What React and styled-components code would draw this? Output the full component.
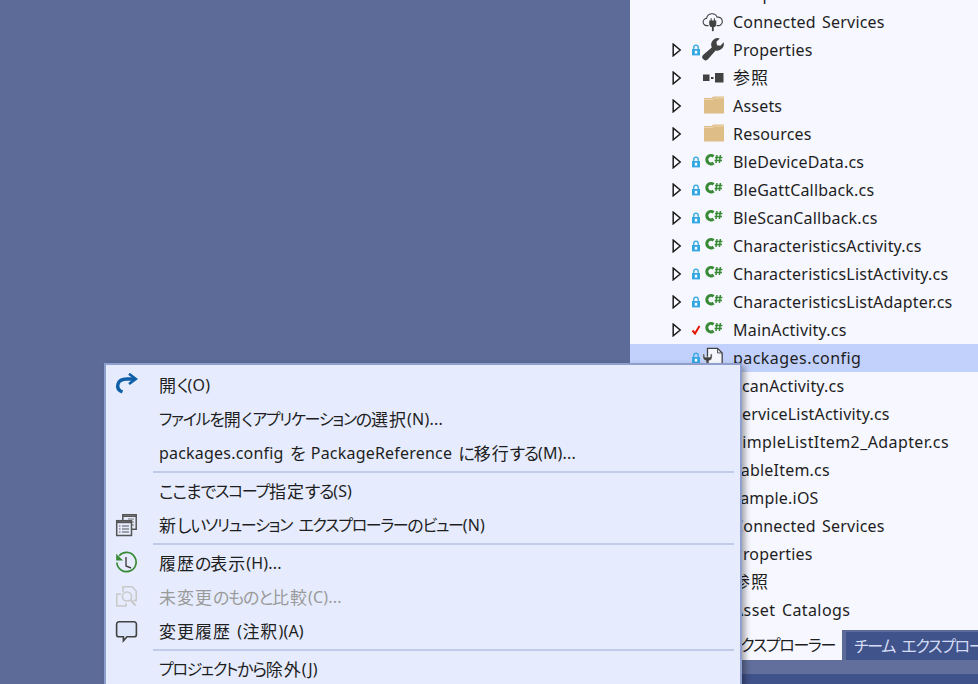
import React from "react";
import styled, { createGlobalStyle } from "styled-components";

const Global = createGlobalStyle`
  html, body { margin: 0; padding: 0; width: 978px; height: 684px; overflow: hidden; background: #5d6b99; }
  #root { width: 978px; height: 684px; }
`;
const FONT = `"Noto Sans", "Noto Sans CJK JP", sans-serif`;

const Page = styled.div`
  position: relative; width: 978px; height: 684px; overflow: hidden;
  display: flex; background: #5d6b99; font-family: ${FONT}; letter-spacing: 0.2px;
`;
const Editor = styled.div`flex: 0 0 630px;`;
const Side = styled.div`flex: 1; display: flex; flex-direction: column; min-width: 0;`;
const Tree = styled.div`height: 630px; background: #f6f7ff; overflow: hidden; flex: none;`;
const TreeInner = styled.div`margin-top: -20px;`;
const Row = styled.div`
  height: 28px; display: flex; align-items: center; position: relative; white-space: nowrap;
  background: ${p => (p.$selected ? "#c2d1fb" : "transparent")};
  color: #1e1e1e; font-size: 16px;
`;
const Arrow = styled.span`position: absolute; left: 42px; top: 7px; width: 10px; height: 14px; display: flex;`;
const Badge = styled.span`position: absolute; left: 61px; top: 8px; width: 10px; height: 12px; display: flex;`;
const Ico = styled.span`position: absolute; left: 72px; top: 3px; width: 22px; height: 22px; display: flex; align-items: center; justify-content: center;`;
const Label = styled.span`position: absolute; left: ${p => p.$x}px; top: 3px; letter-spacing: ${p => p.$ls}px;`;

const Tabs = styled.div`height: 30px; display: flex; flex: none; background: #5d6b99;`;
const ActiveTab = styled.div`
  width: 212px; background: #f6f7ff; color: #1e1e1e; font-size: 16px;
  display: flex; align-items: center; justify-content: flex-end; padding-right: 7px; box-sizing: border-box; white-space: pre;
`;
const Tab = styled.div`
  flex: 1; min-width: 0; background: #40548b; color: #d5dcf5; font-size: 16px; overflow: hidden;
  border-left: 4px solid #5d6b99; border-top: 2px solid #5d6b99;
  display: flex; align-items: center; padding-left: 8px; white-space: pre;
`;
const Strip = styled.div`height: 14px; background: #626f9c; flex: none;`;
const Status = styled.div`flex: 1; background: #40528a;`;

const Menu = styled.div`
  position: absolute; left: 104px; top: 363px; width: 638px; height: 340px; box-sizing: border-box;
  background: #e6ecfd; border: 2px solid #8e9fce; padding: 3px 0;
  box-shadow: 3px 3px 6px rgba(0,0,0,.35);
`;
const Item = styled.div`
  height: 34px; display: flex; align-items: center; position: relative; padding-left: 53px;
  font-size: 16px; white-space: pre; color: ${p => (p.$disabled ? "#9a9a9a" : "#1e1e1e")};
`;
const ItemIcon = styled.span`position: absolute; left: 8px; top: 5px; width: 24px; height: 24px; display: flex;`;
const Sep = styled.div`height: 2px; margin: 1px 6px 1px 47px; background: #bfcbe8;`;

const Latin = styled.span`word-spacing: 2px;`;
const Kanji = styled.span`
  font-size: 17px; line-height: 1; letter-spacing: 1px; font-feature-settings: "palt" 1;
`;
const Hira = styled.span`
  font-size: 17px; line-height: 1; letter-spacing: -1.2px; font-feature-settings: "palt" 1;
`;
const Kata = styled.span`
  font-size: 16px; line-height: 1; letter-spacing: -1.3px; font-feature-settings: "palt" 1;
`;
const runKind = s => {
  if (/^[\u30a0-\u30ff]/.test(s)) return Kata;
  if (/^[\u3040-\u309f]/.test(s)) return Hira;
  if (/^[\u3400-\u9fff]/.test(s)) return Kanji;
  return Latin;
};
const Txt = ({ children }) => (
  <>
    {children.split(/([\u30a0-\u30ff]+|[\u3040-\u309f]+|[\u3400-\u9fff]+)/).map((s, i) => {
      if (!s) return null;
      const Run = runKind(s);
      return <Run key={i}>{s}</Run>;
    })}
  </>
);

const ArrowIcon = () => (
  <svg width="10" height="14" viewBox="0 0 10 14"><path d="M1.2 1.2 L8.2 7 L1.2 12.8 Z" fill="#fbfbff" stroke="#1e1e1e" strokeWidth="1.5" /></svg>
);
const Lock = () => (
  <svg width="10" height="12" viewBox="0 0 10 12"><path d="M2.8 5V3.4a2.2 2.2 0 0 1 4.4 0V5" fill="none" stroke="#35a7e3" strokeWidth="1.3" /><rect x="1" y="5" width="8" height="6.4" fill="#35a7e3" /><rect x="3.8" y="6.8" width="2.4" height="2.8" fill="#fff" /></svg>
);
const Check = () => (
  <svg width="10" height="12" viewBox="0 0 10 12"><path d="M1.5 6.5 L4 9.5 L8.5 2" fill="none" stroke="#e51400" strokeWidth="2" /></svg>
);
const CSharp = () => (
  <svg width="22" height="22" viewBox="0 0 22 22">
    <path d="M11.6 5.4 A4.2 4.2 0 1 0 11.6 12" fill="none" stroke="#388a34" strokeWidth="3" />
    <path d="M15 4 L14 12 M18.4 4 L17.4 12 M13 6.6 H20.4 M12.6 9.6 H20" stroke="#388a34" strokeWidth="1.5" fill="none" />
  </svg>
);
const Wrench = () => (
  <svg width="22" height="22" viewBox="0 0 22 22" style={{ overflow: "visible" }}>
    <path d="M21.6 3.2 A6.6 6.6 0 0 1 13.6 11.4 L6.2 20 A3 3 0 0 1 1 16 L9.8 8.4 A6.6 6.6 0 0 1 17.8 -0.6 L14.4 2.8 L15 6.2 L18.4 6.8 Z" fill="#424242" />
  </svg>
);
const Refs = () => (
  <svg width="22" height="22" viewBox="0 0 22 22"><rect x="1" y="7.5" width="6.5" height="6.5" fill="#424242" /><rect x="9" y="10" width="2.5" height="2" fill="#424242" /><rect x="13" y="6" width="8.5" height="9.5" fill="#424242" /></svg>
);
const Folder = () => (
  <svg width="22" height="22" viewBox="0 0 22 22"><path d="M2 3 H9.5 L11.5 1.5 H22 V18.5 H2 Z" fill="#dfbd87" /><path d="M2 4.5 H10.5 L12.5 3 H22" stroke="#ecd7b2" strokeWidth="1" fill="none" /></svg>
);
const Cloud = () => (
  <svg width="24" height="24" viewBox="0 0 24 24" fill="none" stroke="#424242" strokeWidth="1.2">
    <path d="M7 16 H5.5 A4 4 0 0 1 5 8 A6 6 0 0 1 16.5 6.8 A4.6 4.6 0 0 1 18.5 16 H16" />
    <path d="M8.5 11 H15 V14 A3 3 0 0 1 8.5 14 Z M10 8 V11 M13.5 8 V11" fill="#424242" stroke="#424242" />
    <path d="M11.8 16 V22" strokeWidth="2" />
  </svg>
);
const Project = () => (
  <svg width="16" height="16" viewBox="0 0 16 16"><path d="M1 3 H15 V14 H1 Z" fill="#424242" /><path d="M3 6 H5 V8 H3 Z M7 6 H9 V8 H7 Z M11 6 H13 V8 H11 Z" fill="#f6f7ff" /></svg>
);
const ConfigFile = () => (
  <svg width="24" height="24" viewBox="0 0 24 24">
    <path d="M6 1.5 H17 L22 6.5 V24 H6 Z" fill="#f6f7ff" stroke="#424242" strokeWidth="1.4" />
    <path d="M17 1.5 V6.5 H22" fill="none" stroke="#424242" strokeWidth="1" />
    <path d="M1 7 V11 A4 4 0 0 0 4.5 15 V24 H7.5 V15 A4 4 0 0 0 11 11 V7 L9 8.5 V11 H3 V8.5 Z" fill="#424242" stroke="#f6f7ff" strokeWidth=".5" />
  </svg>
);
const OpenIcon = () => (
  <svg width="24" height="24" viewBox="0 0 24 24" fill="none">
    <path d="M8.5 19 C4.5 17.5 3 14.5 4 11 C5 7.5 8.5 6 13 6 H21" stroke="#0e5ea8" strokeWidth="3.4" />
    <path d="M15 0.8 L21.8 5.9 L15 11" stroke="#0e5ea8" strokeWidth="2.6" />
  </svg>
);
const SolutionView = () => (
  <svg width="24" height="24" viewBox="0 0 24 24" fill="none">
    <path d="M8.8 7 V1.8 H22.2 V16.2 H18" stroke="#555" strokeWidth="1.5" />
    <path d="M9 3.2 H22" stroke="#555" strokeWidth="1.6" />
    <path d="M14 6 H20 M18 9 H20 M18 12 H20" stroke="#777" strokeWidth="1.1" />
    <rect x="2.7" y="7.7" width="14.8" height="14.8" stroke="#555" strokeWidth="1.5" fill="#e6ecfd" />
    <path d="M2.7 9.2 H17.5" stroke="#555" strokeWidth="2" />
    <path d="M5 13 H6.5 M8 13 H15 M5 16 H6.5 M8 16 H15 M5 19 H6.5 M8 19 H15" stroke="#555" strokeWidth="1.2" />
  </svg>
);
const History = () => (
  <svg width="24" height="24" viewBox="0 0 24 24" fill="none">
    <path d="M5.2 4.8 A9.6 9.6 0 1 1 2.9 11.5" stroke="#388a34" strokeWidth="1.7" />
    <path d="M2.2 2.8 V9.6 H9 Z" fill="#388a34" />
    <path d="M12 6 V15 L17 17" stroke="#424242" strokeWidth="1.4" />
  </svg>
);
const Compare = () => (
  <svg width="24" height="24" viewBox="0 0 24 24" fill="none" stroke="#c8c8c8" strokeWidth="1.5">
    <path d="M7 9 H2.8 V21 H12 V18" />
    <path d="M9 7 V1.8 H18 L22.2 6 V15.5 H19" />
    <circle cx="13" cy="11.5" r="4.6" />
    <path d="M16.5 15 L21.5 20.5" strokeWidth="2" />
  </svg>
);
const Comment = () => (
  <svg width="24" height="24" viewBox="0 0 24 24" fill="none">
    <path d="M5 2.8 H20 A2.4 2.4 0 0 1 22.4 5.2 V15.4 A2.4 2.4 0 0 1 20 17.8 H13 L9.4 21.8 V17.8 H5 A2.4 2.4 0 0 1 2.6 15.4 V5.2 A2.4 2.4 0 0 1 5 2.8 Z" stroke="#424242" strokeWidth="1.6" fill="#dee6fb" />
  </svg>
);

const rows = [
  { x: 75, t: "BleSample.Droid", icon: <Project /> },
  { t: "Connected Services", icon: <Cloud /> },
  { a: 1, b: <Lock />, t: "Properties", icon: <Wrench /> },
  { a: 1, t: "参照", icon: <Refs /> },
  { a: 1, t: "Assets", icon: <Folder /> },
  { a: 1, t: "Resources", icon: <Folder /> },
  { a: 1, b: <Lock />, t: "BleDeviceData.cs", icon: <CSharp /> },
  { a: 1, b: <Lock />, t: "BleGattCallback.cs", icon: <CSharp /> },
  { a: 1, b: <Lock />, t: "BleScanCallback.cs", icon: <CSharp /> },
  { a: 1, b: <Lock />, t: "CharacteristicsActivity.cs", icon: <CSharp /> },
  { a: 1, b: <Lock />, t: "CharacteristicsListActivity.cs", icon: <CSharp /> },
  { a: 1, b: <Lock />, t: "CharacteristicsListAdapter.cs", icon: <CSharp /> },
  { a: 1, b: <Check />, t: "MainActivity.cs", icon: <CSharp /> },
  { b: <Lock />, t: "packages.config", icon: <ConfigFile />, sel: true, ls: 0.45 },
  { t: "ScanActivity.cs" },
  { t: "ServiceListActivity.cs" },
  { t: "SimpleListItem2_Adapter.cs", ls: 0.4 },
  { t: "TableItem.cs" },
  { x: 77, t: "BleSample.iOS" },
  { t: "Connected Services" },
  { t: "Properties" },
  { t: "参照" },
  { t: "Asset Catalogs", ls: 0.4 },
];

export default function App() {
  return (
    <Page>
      <Global />
      <Editor />
      <Side>
        <Tree>
          <TreeInner>
            {rows.map((r, i) => (
              <Row key={i} $selected={r.sel}>
                {r.a && <Arrow><ArrowIcon /></Arrow>}
                {r.b && <Badge>{r.b}</Badge>}
                {r.icon && <Ico>{r.icon}</Ico>}
                <Label $x={r.x || 103} $ls={r.ls ?? 0.2}><Txt>{r.t}</Txt></Label>
              </Row>
            ))}
          </TreeInner>
        </Tree>
        <Tabs>
          <ActiveTab><Txt>ソリューション エクスプローラー</Txt></ActiveTab>
          <Tab><Txt>チーム エクスプローラー</Txt></Tab>
        </Tabs>
        <Strip />
        <Status />
      </Side>
      <Menu>
        <Item><ItemIcon><OpenIcon /></ItemIcon><Txt>開く(O)</Txt></Item>
        <Item><Txt>ファイルを開くアプリケーションの選択(N)...</Txt></Item>
        <Item><Txt>packages.config を PackageReference に移行する(M)...</Txt></Item>
        <Sep />
        <Item><Txt>ここまでスコープ指定する(S)</Txt></Item>
        <Item><ItemIcon><SolutionView /></ItemIcon><Txt>新しいソリューション エクスプローラーのビュー(N)</Txt></Item>
        <Sep />
        <Item><ItemIcon><History /></ItemIcon><Txt>履歴の表示(H)...</Txt></Item>
        <Item $disabled><ItemIcon><Compare /></ItemIcon><Txt>未変更のものと比較(C)...</Txt></Item>
        <Item><ItemIcon><Comment /></ItemIcon><Txt>変更履歴 (注釈)(A)</Txt></Item>
        <Sep />
        <Item><Txt>プロジェクトから除外(J)</Txt></Item>
      </Menu>
    </Page>
  );
}
